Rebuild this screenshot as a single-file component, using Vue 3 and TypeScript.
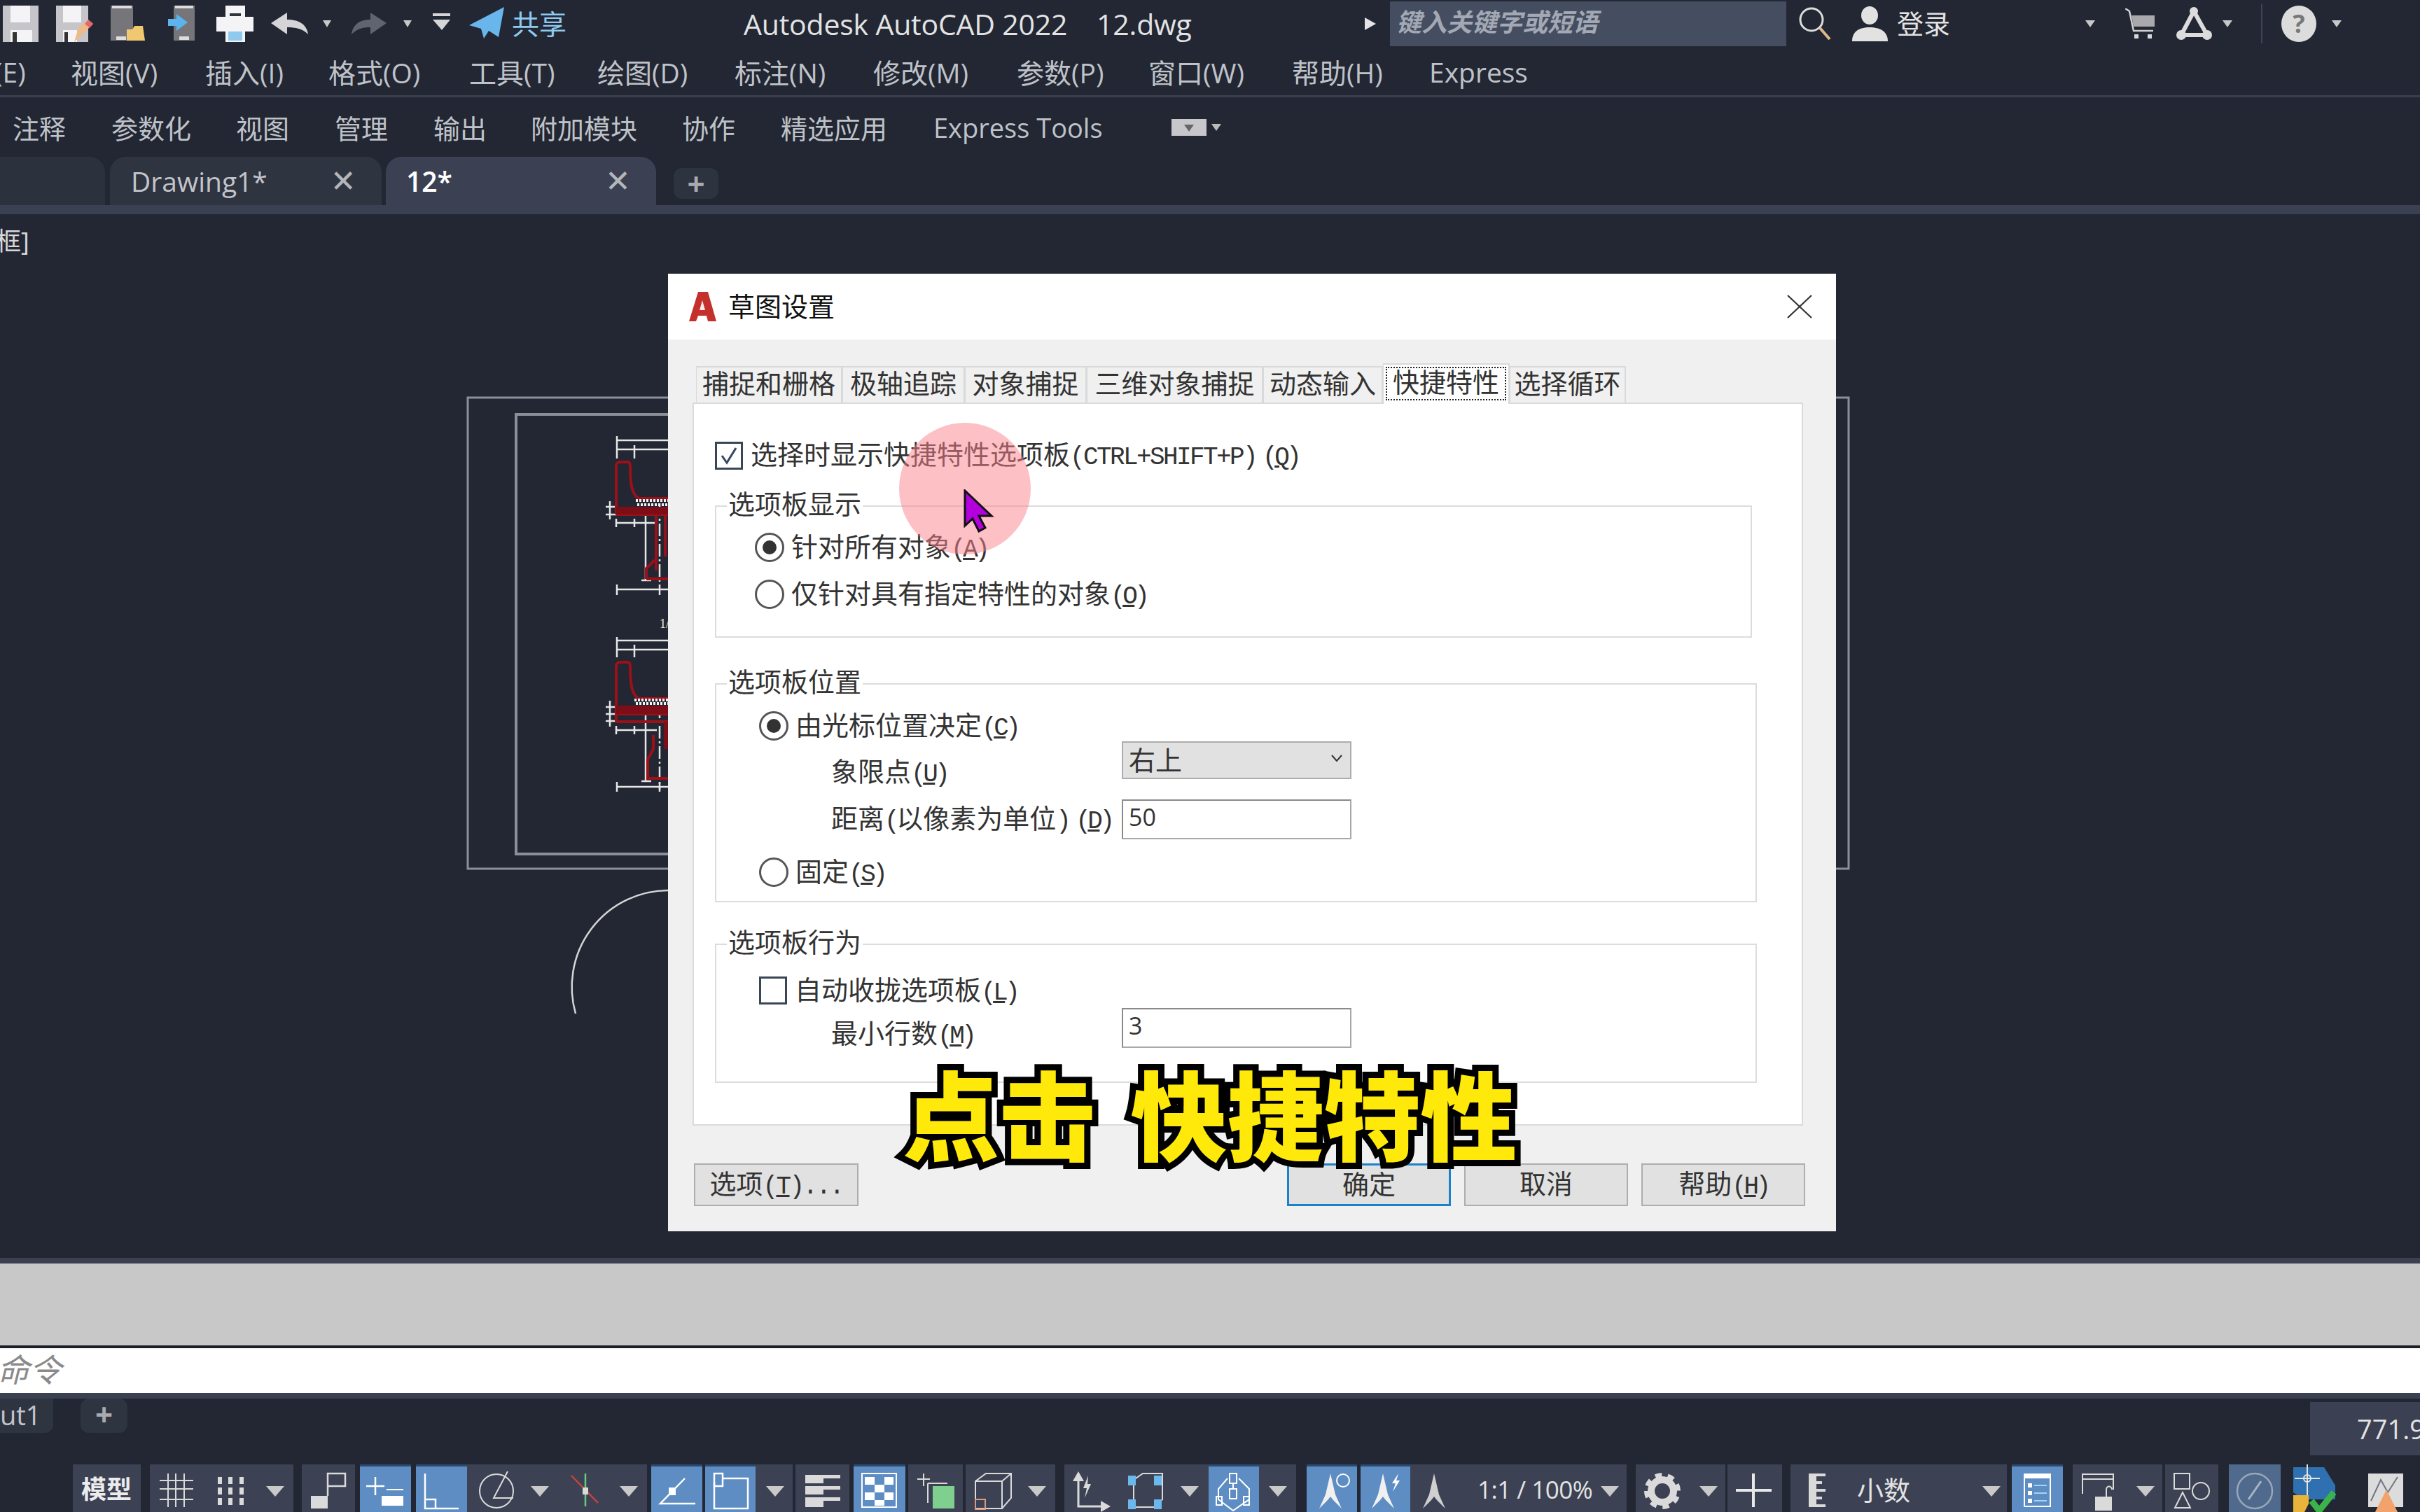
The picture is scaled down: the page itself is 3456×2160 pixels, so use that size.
<template>
  <div class="app">
    <!-- title bar -->
    <div class="titlebar">
      <svg class="qat" width="725" height="68" viewBox="0 0 725 68">
        <path d="M4 8h51v52H4z" fill="#c6c6ca" />
        <path d="M15 8h28v24H15zM15 43h31v17H15z" fill="#f4f4f6" />
        <path d="M18 46h6v14h-6z" fill="#333" />
        <path d="M80 8h46v52H80z" fill="#c6c6ca" />
        <path d="M90 8h26v24H90zM90 43h20v17H90z" fill="#f4f4f6" />
        <path d="M92 46h5v14h-5z" fill="#333" />
        <path d="M106 60l6-20 14-12 7 6-14 14z" fill="#f0b98a" />
        <path d="M126 28l7 6-5 6-7-6z" fill="#e26a6a" />
        <path d="M158 8h32v50h-32z" fill="#75757a" />
        <path d="M160 8h28v4h-28zM166 52h14v5h-14z" fill="#ddd" />
        <path d="M181 42h8l3-5h12l3 21h-26z" fill="#f0c870" />
        <path d="M248 8h30v50h-30z" fill="#75757a" />
        <path d="M250 8h26v4h-26zM256 52h14v5h-14z" fill="#ddd" />
        <path d="M240 27h12v-7l16 12-16 12v-7h-12z" fill="#5bb4ee" />
        <path d="M322 8h28v16h-28zM309 24h53v21h-53zM322 45h28v15h-28z" fill="#f4f4f6" />
        <path d="M328 19h16v4h-16z" fill="#30343f" />
        <path d="M326 45h20v13h-20z" fill="#8ec9ee" />
        <path d="M387 33l23-15v10c16 0 28 6 30 21-8-8-18-10-30-10v10z" fill="#d5d5d8" />
        <path d="M552 33l-23-15v10c-14 0-25 6-27 21 8-8 16-10 27-10v10z" fill="#5f6470" />
        <path d="M461 29h12l-6 10zM576 29h12l-6 10z" fill="#c8c8c8" />
        <path d="M618 19h25v4h-25zM618 28h25l-12 15z" fill="#d5d5d8" />
        <path d="M670 36l50-26-8 43-14-9-7 11-4-14z" fill="#69b6ec" />
      </svg>
      <span class="share">共享</span>
      <span class="app-title">Autodesk AutoCAD 2022&nbsp;&nbsp;&nbsp;&nbsp;12.dwg</span>
      <svg class="play" width="16" height="18" viewBox="0 0 16 18"><path d="M0 0l16 9-16 9z" fill="#e4e4e4" /></svg>
      <div class="search">键入关键字或短语</div>
      <svg class="glass" width="49" height="50" viewBox="0 0 49 50">
        <circle cx="19" cy="19" r="16" fill="none" stroke="#dcdcdc" stroke-width="3" />
        <path d="M31 31l14 16" stroke="#e0b98a" stroke-width="4" />
      </svg>
      <svg class="user" width="51" height="50" viewBox="0 0 51 50">
        <ellipse cx="25" cy="13" rx="12" ry="13" fill="#e2e2e2" />
        <path d="M0 50c0-14 10-20 25-20s26 6 26 20z" fill="#e2e2e2" />
      </svg>
      <span class="login">登录</span>
      <svg class="tiny login-caret" width="14" height="10" viewBox="0 0 14 10"><path d="M0 0h14l-7 10z" fill="#c8c8c8" /></svg>
      <svg class="cart" width="44" height="44" viewBox="0 0 44 44">
        <path d="M0 0l6 4 6 28h28" fill="none" stroke="#d0d0d0" stroke-width="2.5" />
        <path d="M9 10h33v16H12z" fill="#a9a9ad" />
        <path d="M13 37h6v6h-6zM32 37h6v6h-6z" fill="#d8d8d8" />
      </svg>
      <svg class="a360" width="51" height="48" viewBox="0 0 51 48">
        <circle cx="25" cy="6" r="6" fill="#dcdcdc" />
        <circle cx="7" cy="40" r="7" fill="#dcdcdc" />
        <circle cx="44" cy="40" r="7" fill="#dcdcdc" />
        <path d="M25 6L7 40h37z" fill="none" stroke="#dcdcdc" stroke-width="6" />
      </svg>
      <svg class="tiny a360-caret" width="14" height="10" viewBox="0 0 14 10"><path d="M0 0h14l-7 10z" fill="#c8c8c8" /></svg>
      <div class="sep"></div>
      <div class="help">?</div>
      <svg class="tiny help-caret" width="14" height="10" viewBox="0 0 14 10"><path d="M0 0h14l-7 10z" fill="#c8c8c8" /></svg>
    </div>

    <!-- menu -->
    <div class="menubar">
      <span v-for="m in menus" :key="m">{{ m }}</span>
    </div>

    <!-- ribbon tabs -->
    <div class="ribbon">
      <span v-for="r in ribbonTabs" :key="r">{{ r }}</span>
      <span class="ribbon-more">
        <i class="more-box"></i>
        <i class="more-caret"></i>
      </span>
    </div>

    <!-- file tabs -->
    <div class="doctabs">
      <div class="doc doc-start"></div>
      <div class="doc doc-one"><span>Drawing1*</span><b>✕</b></div>
      <div class="doc doc-two"><span>12*</span><b>✕</b></div>
      <div class="doc-add">+</div>
    </div>
    <div class="docband"></div>

    <!-- model space -->
    <div class="canvas">
      <span class="viewlabel">框]</span>
      <svg class="drawing" width="3456" height="1491" viewBox="0 306 3456 1491">
        <g fill="none" stroke="#8b8f97">
          <path d="M668 568H2640V1241H668z" stroke-width="3" />
          <path d="M737 592H1000V1220H737z" stroke-width="4" />
        </g>
        <g fill="none" stroke="#e6e6e6" stroke-width="2.5">
          <path d="M881 623V655M881 629H960M881 642H960M906 636V655M865 724H880M865 735H880M871 716V742" />
          <path d="M880 747H938M880 741V753M906 741V753M922 724V829M916 829H930M880 842H960M881 835V850M942 835V850" />
          <path d="M942 719V834" stroke-dasharray="18 4 3 4" />
          <path d="M881 910V939M881 915H960M881 928H960M906 921V939" />
          <path d="M865 1010H880M865 1020H880M865 1030H880M871 1001V1038" />
          <path d="M880 1043H938M880 1037V1049M906 1037V1049M922 1022V1116M916 1116H930M880 1124H960M881 1117V1131M942 1117V1131" />
          <path d="M942 1008V1128" stroke-dasharray="18 4 3 4" />
          <path d="M954 1272A138 138 0 0 0 822 1448" stroke="#d5d5d5" />
        </g>
        <g fill="none" stroke="#9c1019" stroke-width="4">
          <path d="M880 735V666Q880 660 886 660H897Q900 660 900 668C900 690 902 706 912 712H960" />
          <path d="M880 735H960M937 735V815M923 827V812L935 800M923 827H960M950 735V795" />
          <path d="M880 1031V952Q880 946 886 946H897Q900 946 900 954C900 976 902 992 912 998H960" />
          <path d="M880 1031H960M880 1020H960M933 1050V1070L925 1085V1112H960" />
        </g>
        <path d="M880 724h80v11h-80zM880 1008h80v12h-80zM948 1031h12v39h-12z" fill="#7d0d16" />
        <g fill="none" stroke="#f2f2f2" stroke-width="4" stroke-dasharray="3 2">
          <path d="M908 715H960M910 721H960M906 1000H960M908 1005H960" />
        </g>
        <text x="942" y="897" fill="#e6e6e6" font-size="18" font-family="Liberation Serif, serif">1/</text>
      </svg>
    </div>

    <div class="cmdband"></div>
    <div class="history"></div>
    <div class="cmdline"><span>命令</span></div>

    <!-- layout tabs + coordinates -->
    <div class="layouts">
      <div class="layout-tab">ut1</div>
      <div class="layout-add">+</div>
      <div class="coords">771.9</div>
    </div>

    <!-- status bar -->
    <div class="statusbar">
      <div
        v-for="(it, i) in statusItems"
        :key="i"
        class="st"
        :class="it.kind"
        :style="{ width: it.w + 'px', marginLeft: it.gap + 'px' }"
      >
        <svg :width="it.w" height="68" :viewBox="`0 0 ${it.w} 68`">
          <path
            v-for="(s, k) in it.shapes"
            :key="k"
            :d="s.d"
            :fill="s.fill || 'none'"
            :stroke="s.stroke"
            :stroke-width="s.sw"
            :stroke-dasharray="s.dash"
          />
        </svg>
        <span v-if="it.label" :class="it.labelClass" :style="{ left: it.labelX + 'px' }">{{ it.label }}</span>
      </div>
    </div>

    <!-- dialog -->
    <div class="dialog">
      <div class="dlg-title">
        <svg width="42" height="42" viewBox="0 0 42 42">
          <path d="M14 0h14l12 42H28l-2-8H14l-3 8H1z" fill="#c4302b" />
          <path d="M20 12l-4 14h8z" fill="#fbe9e7" />
        </svg>
        <span class="dlg-name">草图设置</span>
        <svg class="dlg-close" width="36" height="34" viewBox="0 0 36 34">
          <path d="M1 1l34 32M35 1L1 33" stroke="#333" stroke-width="2.2" />
        </svg>
      </div>

      <div class="dlg-body">
        <div class="tabs">
          <div v-for="t in dialogTabs" :key="t" class="tab" :class="{ active: t === '快捷特性' }">
            <span>{{ t }}</span>
          </div>
        </div>

        <div class="panel">
          <div class="row first-check">
            <span class="box checked">
              <svg width="30" height="30" viewBox="0 0 30 30"><path d="M5 15l7 10L25 4" fill="none" stroke="#33475f" stroke-width="3" /></svg>
            </span>
            <span class="txt">选择时显示快捷特性选项板<i class="lat wide">(CTRL+SHIFT+P)</i><i class="lat key-q">(<u>Q</u>)</i></span>
          </div>

          <fieldset class="group g-display">
            <legend>选项板显示</legend>
            <div class="row radio-row r-all">
              <span class="radio on"></span>
              <span class="txt">针对所有对象<i class="lat">(<u>A</u>)</i></span>
            </div>
            <div class="row radio-row r-some">
              <span class="radio"></span>
              <span class="txt">仅针对具有指定特性的对象<i class="lat">(<u>O</u>)</i></span>
            </div>
          </fieldset>

          <fieldset class="group g-position">
            <legend>选项板位置</legend>
            <div class="row radio-row r-cursor">
              <span class="radio on"></span>
              <span class="txt">由光标位置决定<i class="lat">(<u>C</u>)</i></span>
            </div>
            <div class="row field f-quad">
              <span class="txt lbl l-quad">象限点<i class="lat">(<u>U</u>)</i></span>
              <div class="select">
                <span>右上</span>
                <svg width="16" height="10" viewBox="0 0 16 10"><path d="M1 1l7 8 7-8" fill="none" stroke="#333" stroke-width="2" /></svg>
              </div>
            </div>
            <div class="row field f-dist">
              <span class="txt lbl l-dist">距离<i class="lat">(</i>以像素为单位<i class="lat">)</i><i class="lat key-d">(<u>D</u>)</i></span>
              <div class="input">50</div>
            </div>
            <div class="row radio-row r-fixed">
              <span class="radio"></span>
              <span class="txt">固定<i class="lat">(<u>S</u>)</i></span>
            </div>
          </fieldset>

          <fieldset class="group g-behavior">
            <legend>选项板行为</legend>
            <div class="row radio-row r-collapse">
              <span class="box"></span>
              <span class="txt">自动收拢选项板<i class="lat">(<u>L</u>)</i></span>
            </div>
            <div class="row field f-min">
              <span class="txt lbl l-min">最小行数<i class="lat">(<u>M</u>)</i></span>
              <div class="input">3</div>
            </div>
          </fieldset>
        </div>

        <div class="buttons">
          <div class="btn">选项<i class="lat wide">(<u>T</u>)...</i></div>
          <div class="btn primary">确定</div>
          <div class="btn">取消</div>
          <div class="btn">帮助<i class="lat">(<u>H</u>)</i></div>
        </div>
      </div>
    </div>

    <!-- screen recording overlays -->
    <div class="spot"></div>
    <svg class="pointer" width="44" height="62" viewBox="0 0 44 62">
      <path d="M2 2v50l11-10 9 18 9-5-9-17h18z" fill="#b300dc" stroke="#111" stroke-width="3" />
    </svg>
    <div class="subtitle">点击 快捷特性</div>
  </div>
</template>

<script setup lang="ts">
interface Shape {
  d: string;
  fill?: string;
  stroke?: string;
  sw?: number;
  dash?: string;
}
interface StatusItem {
  w: number;
  gap: number;
  kind: string;
  shapes: Shape[];
  label?: string;
  labelX?: number;
  labelClass?: string;
}

const menus = ['(E)', '视图(V)', '插入(I)', '格式(O)', '工具(T)', '绘图(D)', '标注(N)', '修改(M)', '参数(P)', '窗口(W)', '帮助(H)', 'Express'];
const ribbonTabs = ['注释', '参数化', '视图', '管理', '输出', '附加模块', '协作', '精选应用', 'Express Tools'];
const dialogTabs = ['捕捉和栅格', '极轴追踪', '对象捕捉', '三维对象捕捉', '动态输入', '快捷特性', '选择循环'];

const W = '#dadada';
const box = (x: number, y: number, w: number, h: number) => `M${x} ${y}h${w}v${h}h${-w}z`;
const ring = (cx: number, cy: number, r: number) => `M${cx - r} ${cy}a${r} ${r} 0 1 0 ${2 * r} 0a${r} ${r} 0 1 0 ${-2 * r} 0z`;
const caret = (x: number): Shape => ({ d: `M${x} 31h26l-13 15z`, fill: '#c9c9c9' });
const fill = (d: string, c = W): Shape => ({ d, fill: c });
const line = (d: string, c = W, sw = 2.5): Shape => ({ d, stroke: c, sw });
// annotation figure, the little "A" with a pointed foot
const figure = (x: number, c = '#f0f0f0'): Shape =>
  fill(`M${x + 16} 13l7 30 9 20-12-12-4-5-4 5-12 12 9-20z`, c);

const statusItems: StatusItem[] = [
  { w: 97, gap: 104, kind: 'off', shapes: [], label: '模型', labelX: 12, labelClass: 'st-bold' },
  {
    w: 205, gap: 13, kind: 'off',
    shapes: [
      line('M26 13V61M37 13V61M49 13V61M14 23H62M14 35H62M14 50H62', W, 2),
      fill([97, 112, 128].flatMap((x) => [18, 33, 48].map((y) => box(x, y, 6, 10))).join('')),
      caret(166),
    ],
  },
  { w: 76, gap: 12, kind: 'off', shapes: [fill(box(13, 45, 24, 18)), line(`${box(37, 13, 25, 18)}M37 31V45`)] },
  {
    w: 73, gap: 7, kind: 'on',
    shapes: [line('M22 18V44M9 31H35', '#fff'), fill(box(31, 45, 31, 14), '#fff'), line('M38 36H62', '#fff', 2)],
  },
  { w: 73, gap: 7, kind: 'on', shapes: [line(`M13 13V63H61${box(13, 50, 15, 13)}`, '#fff')] },
  {
    w: 257, gap: 0, kind: 'off',
    shapes: [
      line(`${ring(42, 38, 24)}M58 10L38 48H66`, W, 2),
      caret(91),
      line('M169 13V60', '#69c87f'),
      line('M149 16L187 55', '#c8433f'),
      fill(box(165, 33, 8, 10)),
      caret(218),
    ],
  },
  { w: 73, gap: 6, kind: 'on', shapes: [line('M48 20L13 56H63', '#fff'), fill(box(25, 33, 10, 11), '#fff')] },
  { w: 72, gap: 4, kind: 'on', shapes: [line('M25 20H61V63H13V25', '#fff'), line(box(13, 13, 12, 18), '#fff')] },
  { w: 53, gap: 0, kind: 'off', shapes: [caret(15)] },
  {
    w: 77, gap: 4, kind: 'off',
    shapes: [fill(`${box(14, 15, 26, 12)}${box(40, 15, 24, 5)}${box(14, 31, 26, 12)}${box(40, 31, 24, 5)}${box(14, 47, 26, 14)}${box(40, 47, 24, 5)}`)],
  },
  {
    w: 74, gap: 6, kind: 'on',
    shapes: [
      line(box(12, 13, 49, 48), '#fff', 2),
      fill(`${box(16, 18, 14, 11)}${box(44, 18, 13, 11)}${box(30, 29, 14, 11)}${box(16, 40, 14, 11)}${box(44, 40, 13, 11)}${box(30, 51, 14, 8)}`, '#fff'),
    ],
  },
  {
    w: 78, gap: 4, kind: 'off',
    shapes: [line('M22 13V31M13 21H31M28 27H56M28 27V55', W, 2), fill(box(35, 31, 31, 32), '#7fd08f')],
  },
  {
    w: 128, gap: 4, kind: 'off',
    shapes: [
      line('M14 24L29 13H65V48L52 63H14zM14 24H52V63M52 24L65 13', W, 2),
      line(box(14, 50, 14, 14), '#d99b7a', 2),
      caret(89),
    ],
  },
  {
    w: 206, gap: 13, kind: 'off',
    shapes: [
      line('M20 18V60H58', W, 3),
      fill('M20 10l8 14H12zM66 60l-14 8V52z'),
      fill('M34 16l-7 18h5l-3 14 9-20h-5z'),
      line('M99 22L112 13H140V50L128 61H99z', W, 2),
      fill(`${box(91, 16, 11, 14)}${box(128, 16, 11, 14)}${box(91, 50, 11, 14)}${box(128, 50, 11, 14)}`, '#6bb8ec'),
      caret(166),
    ],
  },
  {
    w: 72, gap: 0, kind: 'on',
    shapes: [line(`${box(30, 13, 10, 14)}${box(30, 35, 10, 14)}M35 27V35M27 20L14 35V50L35 66L58 50V35L43 20`, '#fff', 2), line(`${box(11, 46, 8, 12)}${box(50, 46, 8, 12)}`, '#fff', 2)],
  },
  { w: 53, gap: 0, kind: 'off', shapes: [caret(14)] },
  { w: 72, gap: 15, kind: 'on', shapes: [figure(18), line(ring(52, 23, 9), '#fff', 2)] },
  { w: 71, gap: 5, kind: 'on', shapes: [figure(16), fill('M54 13l-9 14h5l-4 12 10-16h-5z', '#fff')] },
  {
    w: 309, gap: 0, kind: 'off',
    shapes: [figure(18, '#cfcfcf'), caret(272)],
    label: '1:1 / 100%', labelX: 96, labelClass: 'st-scale',
  },
  {
    w: 128, gap: 13, kind: 'off',
    shapes: [
      { d: ring(38, 38, 22), stroke: W, sw: 8, dash: '9 8.3' },
      { d: ring(38, 38, 16), stroke: W, sw: 10 },
      caret(91),
    ],
  },
  { w: 78, gap: 3, kind: 'off', shapes: [line('M37 13V61M12 37H63', '#e8e8e8', 4)] },
  {
    w: 309, gap: 12, kind: 'off',
    shapes: [fill(`${box(26, 13, 11, 48)}${box(37, 13, 13, 4)}${box(37, 24, 8, 4)}${box(37, 35, 13, 4)}${box(37, 46, 8, 4)}${box(37, 57, 13, 4)}`), caret(274)],
    label: '小数', labelX: 95, labelClass: 'st-units',
  },
  {
    w: 73, gap: 7, kind: 'on',
    shapes: [
      line(box(18, 14, 37, 46), '#fff', 2),
      fill(box(18, 14, 37, 6), '#fff'),
      fill(`${box(23, 27, 6, 6)}${box(23, 38, 6, 6)}${box(23, 49, 6, 6)}`, '#fff'),
      line('M32 30H50M32 41H50M32 52H50', '#9fd4f5', 2),
    ],
  },
  {
    w: 128, gap: 14, kind: 'off',
    shapes: [line('M14 42V14H58V36M14 21H58', W, 2), fill(box(32, 46, 24, 20)), line('M48 46V36C48 30 56 30 56 36', W, 2), caret(91)],
  },
  { w: 76, gap: 4, kind: 'off', shapes: [line(`${box(13, 13, 22, 22)}${ring(51, 38, 12)}M14 62L25 40L36 62z`, W, 2)] },
  { w: 74, gap: 15, kind: 'mid', shapes: [line(ring(37, 38, 25), '#9aa7b8', 2.5), line('M28 50L46 24', '#aab4c2', 3)] },
  {
    w: 70, gap: 18, kind: 'plain',
    shapes: [
      fill('M0 4h44l16 26v20H14L0 40z', '#2f70b0'),
      line('M20 0V50M2 20H38', '#e4e4e4', 2),
      line(ring(20, 20, 5), '#e4e4e4', 2),
      fill('M0 44h22v12l-6 12H0z', '#e8b53a'),
      line('M26 52L37 66L58 40', '#3bb34a', 9),
    ],
  },
  {
    w: 60, gap: 27, kind: 'plain',
    shapes: [
      fill(box(10, 13, 51, 48), '#dcdcdc'),
      line('M14 52L28 22L38 40L52 18', '#6f7686', 2),
      fill('M36 36L52 68H20z', '#f2a36b'),
    ],
  },
];
</script>

<style scoped>
.app {
  position: relative;
  width: 3456px;
  height: 2160px;
  overflow: hidden;
  background: #222733;
  font-family: "Open Sans", "Noto Sans CJK SC", sans-serif;
  color: #c9ccd2;
  display: flex;
  flex-direction: column;
}
.app i { font-style: normal; }

/* title bar */
.titlebar {
  height: 68px;
  display: flex;
  align-items: center;
  flex: none;
}
.qat { flex: none; }
.share { margin-left: 6px; padding-bottom: 4px; font-size: 39px; color: #8fc9f0; }
.app-title { margin-left: 253px; width: 640px; font-size: 41px; color: #e3e3e3; white-space: nowrap; letter-spacing: -0.2px; }
.play { margin-left: 247px; }
.search {
  margin-left: 20px;
  width: 566px;
  height: 64px;
  background: #454d60;
  box-sizing: border-box;
  padding-left: 9px;
  font-size: 36px;
  font-weight: 700;
  font-style: italic;
  line-height: 60px;
  color: #a2a8b4;
  align-self: flex-start;
  margin-top: 2px;
}
.glass { margin-left: 17px; }
.user { margin-left: 28px; }
.login { margin-left: 13px; padding-bottom: 6px; font-size: 38px; color: #e3e3e3; }
.login-caret { margin-left: 193px; }
.cart { margin-left: 43px; }
.a360 { margin-left: 29px; }
.a360-caret { margin-left: 15px; }
.sep { margin-left: 41px; width: 2px; height: 56px; background: #3e4454; }
.help {
  margin-left: 27px;
  width: 50px;
  height: 52px;
  border-radius: 50%;
  background: #dcdcdc;
  color: #777;
  font-size: 36px;
  font-weight: 700;
  text-align: center;
  line-height: 52px;
}
.help-caret { margin-left: 22px; }

/* menu */
.menubar {
  height: 71px;
  flex: none;
  display: grid;
  grid-template-columns: 101px 192px 176px 201px 183px 196px 198px 205px 188px 205px 196px 200px;
  align-items: center;
  font-size: 39px;
  color: #bfc2c8;
  border-bottom: 3px solid #3a3f50;
  white-space: nowrap;
  box-sizing: border-box;
}
.menubar span:first-child { margin-left: -8px; }

/* ribbon tabs */
.ribbon {
  height: 83px;
  flex: none;
  box-sizing: border-box;
  padding: 2px 0 0 18px;
  display: grid;
  grid-template-columns: 141px 178px 141px 141px 139px 216px 141px 218px 340px 80px;
  align-items: center;
  font-size: 38px;
  color: #bfc2c8;
  white-space: nowrap;
}
.ribbon-more { display: flex; align-items: center; gap: 7px; }
.more-box { width: 50px; height: 24px; background: #c7c7cb; position: relative; }
.more-box::after {
  content: "";
  position: absolute;
  left: 18px;
  top: 8px;
  border: 7px solid transparent;
  border-top: 10px solid #666;
  border-bottom: 0;
}
.more-caret { border: 7px solid transparent; border-top: 10px solid #bbb; border-bottom: 0; }

/* file tabs */
.doctabs {
  height: 71px;
  flex: none;
  display: flex;
  align-items: flex-end;
}
.doc {
  height: 69px;
  box-sizing: border-box;
  display: flex;
  align-items: center;
  border-radius: 22px 22px 0 0;
  font-size: 39px;
}
.doc b { font-weight: 700; color: #b4b6bb; font-size: 44px; line-height: 50px; font-family: "DejaVu Sans", sans-serif; }
.doc-start { width: 150px; background: #2c313e; border-top-left-radius: 0; }
.doc-one { width: 388px; margin-left: 7px; background: #2f3441; padding-left: 30px; color: #c2c4c9; }
.doc-one b { margin-left: 90px; }
.doc-two { width: 386px; margin-left: 6px; background: #3b4152; padding-left: 29px; color: #fff; font-weight: 600; }
.doc-two b { margin-left: 218px; }
.doc-add {
  width: 64px;
  height: 44px;
  margin: 0 0 9px 25px;
  background: #2e3340;
  border-radius: 12px;
  text-align: center;
  font-size: 44px;
  font-weight: 700;
  line-height: 44px;
  color: #a8aab0;
}
.docband { height: 13px; flex: none; background: #3b4152; }

/* model space */
.canvas { height: 1491px; flex: none; position: relative; }
.drawing { position: absolute; left: 0; top: 0; }
.viewlabel { position: absolute; left: -6px; top: 10px; font-size: 36px; color: #d8d8d8; }
.cmdband { height: 8px; flex: none; background: #3c4152; }
.history { height: 117px; flex: none; background: #c8c8c8; border-bottom: 4px solid #1c1f27; }
.cmdline {
  height: 64px;
  flex: none;
  background: #fff;
  font-size: 46px;
  font-style: italic;
  line-height: 60px;
  color: #8a8a8a;
  overflow: hidden;
}
.cmdline span { margin-left: -4px; display: inline-block; }

.layouts {
  height: 102px;
  flex: none;
  box-sizing: border-box;
  border-top: 8px solid #3c4152;
  display: flex;
  align-items: flex-start;
}
.layout-tab {
  width: 76px;
  height: 49px;
  background: #2f3441;
  font-size: 38px;
  line-height: 46px;
  color: #c2c4c9;
  border-radius: 0 0 12px 0;
}
.layout-add {
  width: 67px;
  height: 49px;
  margin-left: 39px;
  background: #2f3441;
  border-radius: 12px;
  text-align: center;
  font-size: 44px;
  font-weight: 700;
  line-height: 44px;
  color: #a8aab0;
}
.coords {
  margin: 5px 0 0 auto;
  width: 157px;
  height: 76px;
  box-sizing: border-box;
  padding-left: 67px;
  background: #3b4152;
  font-size: 38px;
  line-height: 76px;
  color: #e3e3e3;
  white-space: nowrap;
  overflow: hidden;
}

/* status bar */
.statusbar { height: 68px; flex: none; display: flex; }
.st { position: relative; height: 68px; flex: none; }
.st svg { position: absolute; left: 0; top: 0; }
.st span { position: absolute; top: 0; line-height: 72px; white-space: nowrap; }
.off { background: #3c4253; }
.on { background: #5d8dc3; border-top: 3px solid #2a4a70; box-sizing: border-box; }
.on svg { top: -3px; }
.mid { background: #4f6a8c; }
.st-bold { font-size: 36px; font-weight: 700; color: #ececec; }
.st-scale { font-size: 35px; letter-spacing: -0.5px; color: #e3e3e3; }
.st-units { font-size: 38px; color: #e3e3e3; }

/* dialog */
.dialog {
  position: absolute;
  left: 954px;
  top: 391px;
  width: 1668px;
  height: 1368px;
  background: #f0f0f0;
  color: #333;
  font-family: "Noto Sans CJK SC", sans-serif;
  font-size: 38px;
  display: flex;
  flex-direction: column;
}
.dlg-title {
  height: 94px;
  flex: none;
  background: #fff;
  display: flex;
  align-items: center;
  padding-left: 29px;
}
.dlg-name { margin-left: 15px; padding-bottom: 6px; color: #111; }
.dlg-close { margin-left: auto; margin-right: 34px; }
.dlg-body { flex: 1; padding: 34px 0 0 35px; }

.tabs {
  display: grid;
  grid-template-columns: 209px 175px 174px 252px 171px 181px 166px;
  height: 56px;
  margin-left: 5px;
  align-items: end;
}
.tab {
  height: 52px;
  box-sizing: border-box;
  background: #f0f0f0;
  border: 2px solid #d9d9d9;
  border-bottom: 0;
  border-left-width: 1px;
  font-size: 38px;
  text-align: center;
  line-height: 42px;
  white-space: nowrap;
  color: #333;
}
.tab.active {
  height: 58px;
  background: #fff;
  position: relative;
  z-index: 1;
  margin-bottom: -2px;
  padding: 3px 3px 0;
}
.tab.active span {
  display: block;
  height: 48px;
  line-height: 36px;
  border: 2px dotted #222;
  box-sizing: border-box;
}

.panel {
  width: 1586px;
  height: 1033px;
  box-sizing: border-box;
  background: #fff;
  border: 2px solid #dadada;
  padding-left: 30px;
  overflow: hidden;
}
.row { display: flex; align-items: center; }
.txt { white-space: nowrap; color: #333; padding-bottom: 8px; }
.lat { font-family: "Liberation Mono", monospace; font-size: 36px; letter-spacing: -4.5px; }
.lat.wide { letter-spacing: -2.6px; }
.key-q { margin-left: 9px; }
.key-d { margin-left: 11px; }
.first-check { height: 41px; margin-top: 53px; }
.box {
  width: 40px;
  height: 40px;
  box-sizing: border-box;
  flex: none;
  border: 3px solid #3a4656;
  background: #fff;
  margin-right: 11px;
  display: flex;
  align-items: center;
  justify-content: center;
}
.radio {
  width: 42px;
  height: 42px;
  box-sizing: border-box;
  flex: none;
  border: 3px solid #555;
  border-radius: 50%;
  background: #fff;
  margin-right: 10px;
  position: relative;
}
.radio.on::after {
  content: "";
  position: absolute;
  left: 8px;
  top: 8px;
  width: 20px;
  height: 20px;
  border-radius: 50%;
  background: #333;
}

.group {
  margin: 0;
  padding: 0;
  min-width: 0;
  box-sizing: border-box;
  border: 2px solid #dcdcdc;
}
.group legend {
  margin-left: 15px;
  padding: 0 2px 0;
  font-size: 38px;
  line-height: 30px;
  height: 40px;
  color: #333;
}
.g-display { width: 1481px; height: 208px; margin-top: 32px; }
.g-display .row { margin-left: 55px; }
.g-position { width: 1488px; height: 332px; margin-top: 46px; }
.g-position .row { margin-left: 61px; }
.g-behavior { width: 1488px; height: 218px; margin-top: 40px; }
.g-behavior .row { margin-left: 61px; }
.radio-row { height: 42px; }
.r-all { margin-top: 18px; }
.r-some { margin-top: 25px; }
.r-cursor { margin-top: 19px; }
.r-fixed { margin-top: 26px; }
.r-collapse { margin-top: 25px; }
.field { padding-left: 103px; align-items: flex-start; }
.lbl { width: 415px; flex: none; box-sizing: border-box; line-height: 40px; }
.f-quad { height: 54px; margin-top: 1px; }
.f-dist { height: 57px; margin-top: 29px; }
.f-min { height: 57px; margin-top: 4px; }
.l-quad { margin-top: 21px; }
.l-dist { margin-top: 5px; }
.l-min { margin-top: 14px; }
.select {
  width: 328px;
  height: 54px;
  box-sizing: border-box;
  background: #e1e1e1;
  border: 2px solid #adadad;
  display: flex;
  align-items: center;
  justify-content: space-between;
  padding: 0 11px 6px 8px;
}
.input {
  width: 328px;
  height: 57px;
  box-sizing: border-box;
  background: #fff;
  border: 2px solid #7a7a7a;
  border-color: #8a8a8a #a8a8a8 #a8a8a8 #8a8a8a;
  padding: 0 8px 6px;
  font-family: "Open Sans", sans-serif;
  font-size: 34px;
  line-height: 46px;
}

.buttons { display: flex; margin: 54px 0 0 2px; }
.btn {
  width: 235px;
  height: 61px;
  box-sizing: border-box;
  background: #e1e1e1;
  border: 2px solid #adadad;
  text-align: center;
  font-size: 38px;
  line-height: 50px;
  color: #333;
}
.btn + .btn { margin-left: 19px; width: 234px; }
.btn:first-child { margin-right: 593px; }
.btn.primary { border: 3px solid #1a82c8; }

/* overlays */
.spot {
  position: absolute;
  left: 1284px;
  top: 604px;
  width: 188px;
  height: 188px;
  border-radius: 50%;
  background: rgba(250, 130, 140, 0.5);
}
.pointer { position: absolute; left: 1376px; top: 699px; }
.subtitle {
  position: absolute;
  left: 1289px;
  top: 1497px;
  font-family: "Noto Sans CJK SC", sans-serif;
  font-size: 138px;
  font-weight: 900;
  line-height: 180px;
  word-spacing: 18px;
  color: #ffe90a;
  white-space: nowrap;
  -webkit-text-stroke: 18px #000;
  paint-order: stroke fill;
}
</style>

<style>
html, body { margin: 0; background: #222733; }
</style>
